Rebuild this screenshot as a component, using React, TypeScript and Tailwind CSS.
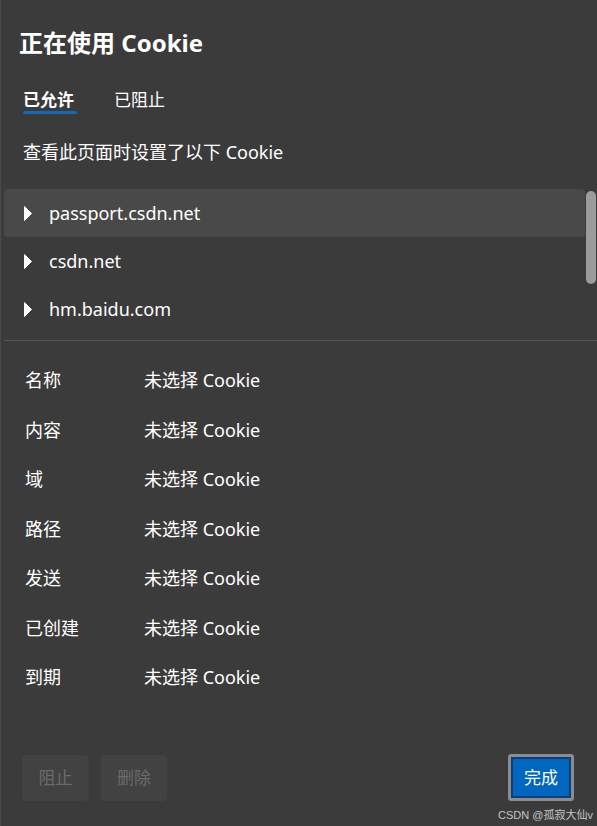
import React from "react";

const domains = ["passport.csdn.net", "csdn.net", "hm.baidu.com"];
const fields = ["名称", "内容", "域", "路径", "发送", "已创建", "到期"];

function Caret() {
    return (
        <svg width="10" height="17" viewBox="0 0 10 17" className="shrink-0">
            <path d="M1.5 1.5 L8.5 8.5 L1.5 15.5 Z" fill="#ffffff" stroke="#ffffff" strokeWidth="1" strokeLinejoin="round" />
        </svg>
    );
}

export default function App() {
    return (
        <div className="relative h-screen w-full overflow-hidden bg-[#3b3b3b] border-l border-[#4a4a4a] text-white font-['Segoe_UI','Noto_Sans','Noto_Sans_CJK_SC',sans-serif] flex flex-col">
            <h1 className="pl-[18px] pt-[27px] text-[24px] leading-[32px] font-bold">正在使用 Cookie</h1>

            <div className="flex items-start gap-[37px] pl-[22px] mt-[30px]">
                <div className="flex flex-col items-start">
                    <span className="text-[17px] leading-[22px] font-bold">已允许</span>
                    <span className="h-[3px] w-[54px] rounded-sm bg-[#0f6cbd]" />
                </div>
                <span className="text-[17px] leading-[22px]">已阻止</span>
            </div>

            <p className="pl-[22px] mt-[25px] text-[18px] leading-[26px]">查看此页面时设置了以下 Cookie</p>

            <div className="relative mt-[24px] ml-[3px]">
                <ul className="pr-[12px]">
                    {domains.map((d, i) => (
                        <li
                            key={d}
                            className={`flex h-[48px] items-center gap-[16px] pl-[19px] rounded-sm text-[18px] ${i === 0 ? "bg-[#494949]" : ""}`}
                        >
                            <Caret />
                            <span>{d}</span>
                        </li>
                    ))}
                </ul>
                <div className="absolute right-[1px] top-[2px] h-[93px] w-[10px] rounded-full bg-[#9b9b9b]" />
                <div className="mt-[7px] h-px bg-[#555555]" />
            </div>

            <dl className="mt-[15px] pl-[24px]">
                {fields.map((f) => (
                    <div key={f} className="flex h-[49.5px] items-center text-[18px]">
                        <dt className="w-[119px]">{f}</dt>
                        <dd>未选择 Cookie</dd>
                    </div>
                ))}
            </dl>

            <div className="mt-auto mb-[25px] flex items-end justify-between pl-[21px] pr-[23px]">
                <div className="flex gap-[12px]">
                    <button className="h-[46px] w-[67px] rounded bg-[#424242] text-[17px] text-[#6b6b6b]">阻止</button>
                    <button className="h-[46px] w-[66px] rounded bg-[#424242] text-[17px] text-[#6b6b6b]">删除</button>
                </div>
                <div className="rounded-[3px] border-[3px] border-[#8c8c8c]">
                    <button className="h-[41px] w-[60px] border-2 border-[#0a3f78] bg-[#0067c0] text-[17px] text-white">完成</button>
                </div>
            </div>

            <span className="absolute right-[4px] bottom-[4px] text-[11px] leading-[14px] text-[#c4c4c4] font-['Liberation_Sans','Noto_Sans_CJK_SC',sans-serif]">CSDN @孤寂大仙v</span>
        </div>
    );
}
